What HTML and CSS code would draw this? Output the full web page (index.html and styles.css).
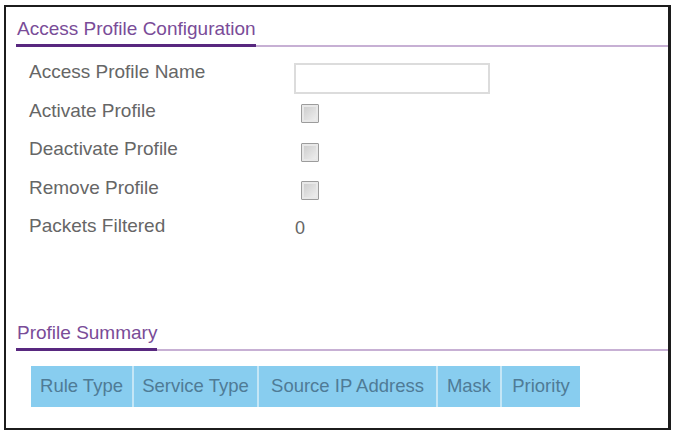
FILE: index.html
```html
<!DOCTYPE html>
<html lang="en">
<head>
    <meta charset="UTF-8">
    <meta name="viewport" content="width=device-width, initial-scale=1.0">
    <title>Access Profile Configuration</title>
    <link rel="stylesheet" href="styles.css">
</head>
<body>
    <div class="panel">
        <div class="section-head">
            <span>Access Profile Configuration</span>
        </div>

        <div class="form">
            <div class="row">
                <label for="name">Access Profile Name</label>
                <input type="text" id="name" class="text-in">
            </div>
            <div class="row">
                <label for="activate">Activate Profile</label>
                <input type="checkbox" id="activate" class="check">
            </div>
            <div class="row">
                <label for="deactivate">Deactivate Profile</label>
                <input type="checkbox" id="deactivate" class="check">
            </div>
            <div class="row">
                <label for="remove">Remove Profile</label>
                <input type="checkbox" id="remove" class="check">
            </div>
            <div class="row">
                <label>Packets Filtered</label>
                <span class="value">0</span>
            </div>
        </div>

        <div class="section-head summary">
            <span>Profile Summary</span>
        </div>

        <table class="summary-table">
            <thead>
                <tr>
                    <th class="col-rule">Rule Type</th>
                    <th class="col-service">Service Type</th>
                    <th class="col-source">Source IP Address</th>
                    <th class="col-mask">Mask</th>
                    <th class="col-priority">Priority</th>
                </tr>
            </thead>
        </table>
    </div>
</body>
</html>
```

FILE: styles.css
```css
html {
    font-size: 19px;
}
body {
    margin: 0;
    background: #ffffff;
    font-family: "Liberation Sans", Arial, sans-serif;
}
.panel {
    box-sizing: border-box;
    width: 667px;
    height: 425px;
    margin: 5px 0 0 4px;
    border: 2px solid #1c1c1c;
    border-right-width: 3px;
    background: #fff;
}
/* section titles with purple underline */
.section-head {
    display: flex;
    margin-left: 10px;
    padding-top: 11px;
    border-bottom: 2px solid #c7b0d4;
}
.section-head span {
    color: #7a4c98;
    font-size: 19px;
    line-height: 22px;
    padding: 0 0 4px 1px;
    border-bottom: 3px solid #58287f;
    margin-bottom: -2px;
}
.section-head.summary {
    margin-top: 65px;
}
.form {
    margin-top: 6px;
}
.row {
    display: flex;
    align-items: center;
    height: 38.5px;
}
.row label {
    width: 265px;
    padding-left: 23px;
    color: #666666;
    font-size: 19px;
}
.text-in {
    box-sizing: border-box;
    width: 196px;
    height: 31px;
    margin: 12px 0 0 0;
    border: 2px solid #dcdcdc;
    background: #fff;
}
.check {
    appearance: none;
    box-sizing: border-box;
    width: 18px;
    height: 19px;
    margin: 6px 0 0 7px;
    border: 1px solid #9c9c9c;
    border-radius: 1px;
    background: linear-gradient(135deg, #c9c9c9, #f2f2f2);
    box-shadow: inset 0 0 0 2px #e8e8e8;
}
.value {
    margin: 4px 0 0 1px;
    color: #666666;
    font-size: 18px;
}
/* summary table header */
.summary-table {
    margin: 15px 0 0 25px;
    border-collapse: collapse;
}
.summary-table th {
    height: 41px;
    padding: 0;
    background: #88cdef;
    color: #4f7b96;
    font-size: 18.5px;
    font-weight: normal;
    text-align: center;
    border-left: 2px solid #c4e6f6;
    white-space: nowrap;
}
.summary-table th:first-child {
    border-left: none;
}
.col-rule { width: 101px; }
.col-service { width: 123px; }
.col-source { width: 177px; }
.col-mask { width: 62px; }
.col-priority { width: 78px; }
```
